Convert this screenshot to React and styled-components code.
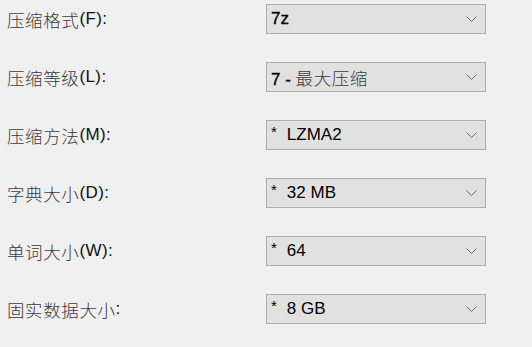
import React from 'react';
import styled, { createGlobalStyle } from 'styled-components';

const GlobalStyle = createGlobalStyle`
  html, body {
    margin: 0;
    padding: 0;
    background: #f0f0f0;
  }
  body {
    font-family: 'Liberation Sans', 'Noto Sans CJK SC', sans-serif;
  }
`;

const Form = styled.div`
  display: grid;
  grid-template-columns: 259px 220px;
  grid-auto-rows: 30px;
  align-content: start;
  row-gap: 28px;
  padding: 4px 0 0 7px;
  width: 532px;
  height: 347px;
  box-sizing: border-box;
  background: #f0f0f0;
`;

const Label = styled.label`
  display: flex;
  align-items: center;
  height: 30px;
  font-size: 17px;
  color: #111;
  white-space: nowrap;
  letter-spacing: 0.4px;
`;

const Cjk = styled.span`
  font-family: 'Noto Sans CJK SC', sans-serif;
  font-size: 17.5px;
  font-weight: 300;
  color: #3a3a3a;
  letter-spacing: 0.6px;
  -webkit-text-stroke: 0;
`;

const Combo = styled.div`
  display: flex;
  align-items: center;
  height: 30px;
  box-sizing: border-box;
  border: 1px solid #adadad;
  background: #e1e1e1;
  padding: 0 8px 0 4px;
`;

const Value = styled.span`
  flex: 1;
  font-size: 17px;
  color: #000;
  white-space: pre;
  -webkit-text-stroke: ${(p) => (p.$strong ? '0.3px #000' : '0')};
`;

const Star = styled.span`
  font-size: 15px;
  margin-right: 10px;
  position: relative;
  top: -3px;
`;

const Chevron = () => (
  <svg width="11" height="7" viewBox="0 0 11 7">
    <path d="M0.5 0.5 L5.5 5.5 L10.5 0.5" fill="none" stroke="#6a6a6a" strokeWidth="1" />
  </svg>
);

const rows = [
  { label: ['压缩格式', '(F):'], value: '7z', strong: true },
  { label: ['压缩等级', '(L):'], value: '7 - ', cjk: '最大压缩', strong: true },
  { label: ['压缩方法', '(M):'], value: 'LZMA2', star: true },
  { label: ['字典大小', '(D):'], value: '32 MB', star: true },
  { label: ['单词大小', '(W):'], value: '64', star: true },
  { label: ['固实数据大小', ':'], value: '8 GB', star: true },
];

export default function App() {
  return (
    <>
      <GlobalStyle />
      <Form>
        {rows.map((r) => (
          <React.Fragment key={r.label[0]}>
            <Label>
              <Cjk>{r.label[0]}</Cjk>
              {r.label[1]}
            </Label>
            <Combo>
              <Value $strong={r.strong}>
                {r.star && <Star>*</Star>}
                {r.value}
                {r.cjk && <Cjk>{r.cjk}</Cjk>}
              </Value>
              <Chevron />
            </Combo>
          </React.Fragment>
        ))}
      </Form>
    </>
  );
}
